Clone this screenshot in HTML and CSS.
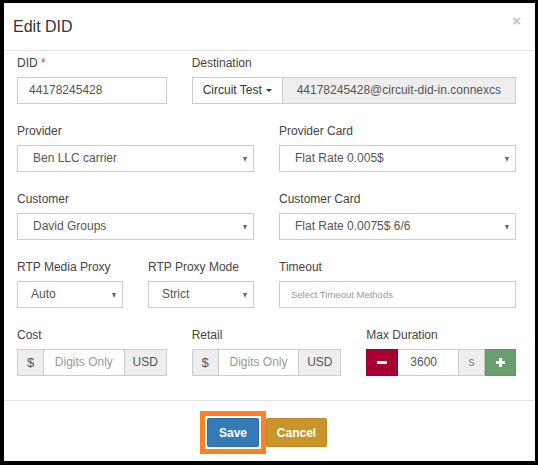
FILE: index.html
```html
<!DOCTYPE html>
<html>
<head>
<meta charset="utf-8">
<link rel="stylesheet" href="styles.css">
</head>
<body>
<div class="modal">
  <div class="modal-header">
    <h4 class="modal-title">Edit DID</h4>
    <span class="close">×</span>
  </div>
  <div class="modal-body">
    <div class="row">
      <div class="group span4">
        <label>DID <span class="req">*</span></label>
        <div class="control input">44178245428</div>
      </div>
      <div class="group span8">
        <label>Destination</label>
        <div class="input-group">
          <div class="btn-drop">Circuit Test <span class="caret"></span></div>
          <div class="addon dest">44178245428@circuit-did-in.connexcs</div>
        </div>
      </div>
    </div>
    <div class="row">
      <div class="group span6">
        <label>Provider</label>
        <div class="control select">Ben LLC carrier<span class="arrow"></span></div>
      </div>
      <div class="group span6">
        <label>Provider Card</label>
        <div class="control select">Flat Rate 0.005$<span class="arrow"></span></div>
      </div>
    </div>
    <div class="row">
      <div class="group span6">
        <label>Customer</label>
        <div class="control select">David Groups<span class="arrow"></span></div>
      </div>
      <div class="group span6">
        <label>Customer Card</label>
        <div class="control select">Flat Rate 0.0075$ 6/6<span class="arrow"></span></div>
      </div>
    </div>
    <div class="row">
      <div class="group span3">
        <label>RTP Media Proxy</label>
        <div class="control select small">Auto<span class="arrow"></span></div>
      </div>
      <div class="group span3">
        <label>RTP Proxy Mode</label>
        <div class="control select small">Strict<span class="arrow"></span></div>
      </div>
      <div class="group span6">
        <label>Timeout</label>
        <div class="control input placeholder-small">Select Timeout Methods</div>
      </div>
    </div>
    <div class="row">
      <div class="group span4">
        <label>Cost</label>
        <div class="input-group">
          <div class="addon dollar">$</div>
          <div class="ig-input placeholder">Digits Only</div>
          <div class="addon usd">USD</div>
        </div>
      </div>
      <div class="group span4">
        <label>Retail</label>
        <div class="input-group">
          <div class="addon dollar">$</div>
          <div class="ig-input placeholder">Digits Only</div>
          <div class="addon usd">USD</div>
        </div>
      </div>
      <div class="group span4">
        <label>Max Duration</label>
        <div class="input-group">
          <div class="btn-minus"><span class="minus"></span></div>
          <div class="ig-input num">3600</div>
          <div class="addon sec">s</div>
          <div class="btn-plus"><span class="plus"></span></div>
        </div>
      </div>
    </div>
  </div>
  <div class="modal-footer">
    <div class="highlight"><button class="btn btn-save">Save</button></div>
    <button class="btn btn-cancel">Cancel</button>
  </div>
</div>
</body>
</html>
```

FILE: styles.css
```css
html, body {
  margin: 0;
  padding: 0;
  background: #000;
  height: 465px;
  overflow: hidden;
}
body {
  font-family: "Liberation Sans", Arial, sans-serif;
  color: #333;
  padding: 3px 3px 4px 4px;
  box-sizing: border-box;
}
.modal {
  background: #fff;
  width: 531px;
  height: 458px;
  display: flex;
  flex-direction: column;
}
.modal-header {
  height: 47px;
  border-bottom: 1px solid #e5e5e5;
  display: flex;
  align-items: center;
  justify-content: space-between;
  padding: 0 14px 0 9px;
}
.modal-title {
  margin: 0;
  font-size: 16px;
  font-weight: normal;
  color: #333;
  padding-top: 0;
}
.close {
  color: #c4c4c4;
  font-size: 15px;
  font-weight: bold;
  align-self: flex-start;
  margin-top: 9px;
}
.modal-body {
  padding: 4px 19px 5px 13px;
}
.row {
  display: grid;
  grid-template-columns: repeat(12, 1fr);
  column-gap: 25px;
}
.span3 { grid-column: span 3; }
.span4 { grid-column: span 4; }
.span6 { grid-column: span 6; }
.span8 { grid-column: span 8; }
.group {
  margin-bottom: 19px;
  min-width: 0;
}
label {
  display: block;
  font-size: 12px;
  line-height: 16px;
  color: #444;
  margin-bottom: 6px;
}
.req { color: #e33; }
.control {
  height: 27px;
  box-sizing: border-box;
  border: 1px solid #ccc;
  font-size: 12px;
  color: #555;
  line-height: 25px;
  padding: 0 11px;
  position: relative;
  white-space: nowrap;
}
.control.select { padding-left: 15px; }
.control.select.small { padding-left: 13px; }
.select .arrow {
  position: absolute;
  right: 6px;
  top: 11px;
  width: 0;
  height: 0;
  border-left: 2.5px solid transparent;
  border-right: 2.5px solid transparent;
  border-top: 5px solid #666;
}
.placeholder-small {
  font-size: 9.5px;
  color: #999;
}
.input-group {
  display: flex;
  height: 27px;
}
.input-group > div {
  box-sizing: border-box;
  border: 1px solid #ccc;
  height: 27px;
  line-height: 25px;
  font-size: 12px;
  white-space: nowrap;
}
.input-group > div + div { border-left: none; }
.btn-drop {
  background: #fff;
  color: #333;
  padding: 0 10px 0 10px;
  width: 91px;
  box-sizing: border-box;
}
.caret {
  display: inline-block;
  width: 0;
  height: 0;
  vertical-align: middle;
  border-left: 3px solid transparent;
  border-right: 3px solid transparent;
  border-top: 3px solid #333;
  margin-left: 1px;
}
.addon {
  background: #eee;
  color: #555;
  text-align: center;
}
.addon.dest {
  flex: 1;
  padding: 0 8px;
  overflow: hidden;
}
.addon.dollar { width: 27px; font-size: 13px; }
.addon.usd { width: 42px; }
.ig-input {
  flex: 1;
  min-width: 0;
  color: #555;
  text-align: center;
}
.ig-input.placeholder { color: #999; }
.ig-input.num { text-align: left; padding-left: 12px; }
.addon.sec { width: 26px; color: #777; }
.btn-minus, .btn-plus {
  display: flex;
  align-items: center;
  justify-content: center;
}
.input-group > .btn-minus {
  width: 32px;
  background: #a80030;
  border-color: #a00028;
}
.input-group > .btn-plus {
  width: 31px;
  background: #6b9e6e;
  border-color: #5f9262;
  border-left: 1px solid #5f9262;
}
.minus {
  display: block;
  width: 10px;
  height: 3px;
  background: #fff;
}
.plus {
  display: block;
  width: 9px;
  height: 9px;
  background:
    linear-gradient(#fff, #fff) center / 9px 3px no-repeat,
    linear-gradient(#fff, #fff) center / 3px 9px no-repeat;
}
.modal-footer {
  border-top: 1px solid #e5e5e5;
  padding: 10px 0 0 0;
  display: flex;
  justify-content: center;
  align-items: flex-start;
  padding-right: 12px;
}
.highlight {
  border: 5px solid #ff7f27;
  padding: 2px;
  margin-right: 0;
}
.btn {
  font-family: "Liberation Sans", Arial, sans-serif;
  font-size: 12px;
  font-weight: bold;
  color: #fff;
  border-radius: 2px;
  height: 29px;
  padding: 0;
  display: block;
}
.btn-save {
  width: 52px;
  background: #337ab7;
  border: 1px solid #2e6da4;
}
.btn-cancel {
  width: 61px;
  margin-top: 7px;
  background: #c9952b;
  border: 1px solid #b88522;
}
```
